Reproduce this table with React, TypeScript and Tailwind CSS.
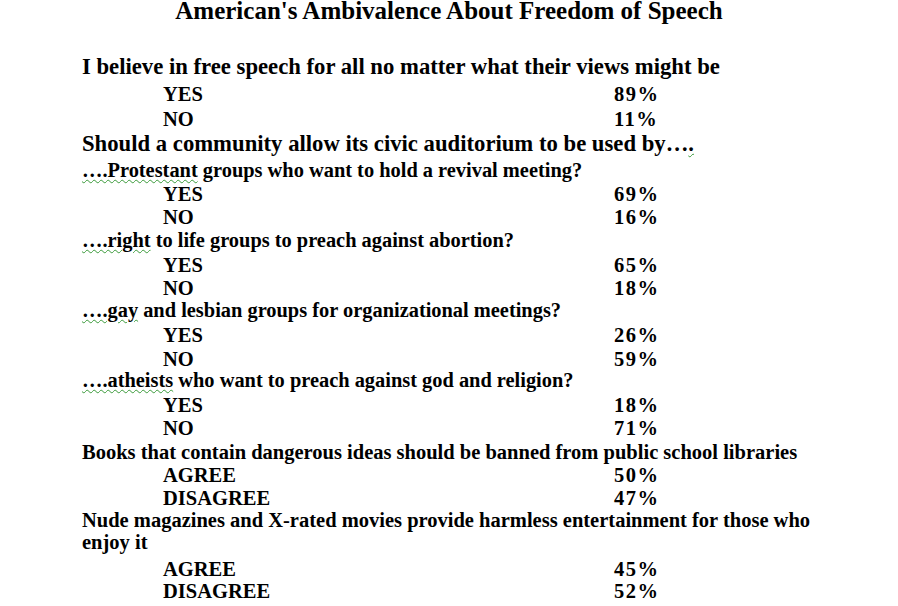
import React from 'react';

type Row =
  | { kind: 'main'; text: string; h: string; big?: boolean; mark?: boolean }
  | { kind: 'sub'; lead: string; text: string; h: string }
  | { kind: 'opt'; label: string; pct: string; h: string };

// heights are taken from the slide, row to row
const rows: Row[] = [
  { kind: 'main', text: 'I believe in free speech for all no matter what their views might be', h: 'h-[27px]', big: true },
  { kind: 'opt', label: 'YES', pct: '89%', h: 'h-[25px]' },
  { kind: 'opt', label: 'NO', pct: '11%', h: 'h-[25px]' },
  { kind: 'main', text: 'Should a community allow its civic auditorium to be used by….', h: 'h-[26px]', big: true, mark: true },
  { kind: 'sub', lead: '….Protestant', text: ' groups who want to hold a revival meeting?', h: 'h-[24px]' },
  { kind: 'opt', label: 'YES', pct: '69%', h: 'h-[23px]' },
  { kind: 'opt', label: 'NO', pct: '16%', h: 'h-[23px]' },
  { kind: 'sub', lead: '….right', text: ' to life groups to preach against abortion?', h: 'h-[25px]' },
  { kind: 'opt', label: 'YES', pct: '65%', h: 'h-[23px]' },
  { kind: 'opt', label: 'NO', pct: '18%', h: 'h-[22px]' },
  { kind: 'sub', lead: '….gay', text: ' and lesbian groups for organizational meetings?', h: 'h-[25px]' },
  { kind: 'opt', label: 'YES', pct: '26%', h: 'h-[24px]' },
  { kind: 'opt', label: 'NO', pct: '59%', h: 'h-[21px]' },
  { kind: 'sub', lead: '….atheists', text: ' who want to preach against god and religion?', h: 'h-[25px]' },
  { kind: 'opt', label: 'YES', pct: '18%', h: 'h-[23px]' },
  { kind: 'opt', label: 'NO', pct: '71%', h: 'h-[24px]' },
  { kind: 'main', text: 'Books that contain dangerous ideas should be banned from public school libraries', h: 'h-[23px]' },
  { kind: 'opt', label: 'AGREE', pct: '50%', h: 'h-[23px]' },
  { kind: 'opt', label: 'DISAGREE', pct: '47%', h: 'h-[22px]' },
  { kind: 'main', text: 'Nude magazines and X-rated movies provide harmless entertainment for those who', h: 'h-[22px]' },
  { kind: 'main', text: 'enjoy it', h: 'h-[27px]' },
  { kind: 'opt', label: 'AGREE', pct: '45%', h: 'h-[22px]' },
  { kind: 'opt', label: 'DISAGREE', pct: '52%', h: 'h-[24px]' },
];

const squiggle = 'underline decoration-wavy decoration-[#3a9a3a] decoration-1 underline-offset-2';

function SlideRow({ row }: { row: Row }) {
  if (row.kind === 'opt') {
    return (
      <div className={`${row.h} flex pl-[81px] text-[20.5px] leading-[24px]`}>
        <span className="w-[451px]">{row.label}</span>
        <span className="tracking-[1.5px]">{row.pct}</span>
      </div>
    );
  }
  if (row.kind === 'sub') {
    return (
      <div className={`${row.h} text-[20.4px] leading-[24px] whitespace-nowrap`}>
        <span className={squiggle}>{row.lead}</span>
        {row.text}
      </div>
    );
  }
  return (
    <div
      className={`${row.h} ${row.big ? 'text-[22.7px]' : 'text-[20.5px]'} leading-[24px] whitespace-nowrap`}
    >
      {row.mark ? (
        <>
          {row.text.slice(0, -1)}
          <span className={squiggle}>{row.text.slice(-1)}</span>
        </>
      ) : (
        row.text
      )}
    </div>
  );
}

export default function App() {
  return (
    <div className="w-[898px] h-[606px] overflow-hidden bg-white text-black font-bold font-['Liberation_Serif','Times_New_Roman',serif]">
      <div className="h-[55px] text-center text-[25px] leading-[21px]">
        American's Ambivalence About Freedom of Speech
      </div>
      <div className="flex flex-col pl-[82px]">
        {rows.map((row, i) => (
          <SlideRow key={i} row={row} />
        ))}
      </div>
    </div>
  );
}
